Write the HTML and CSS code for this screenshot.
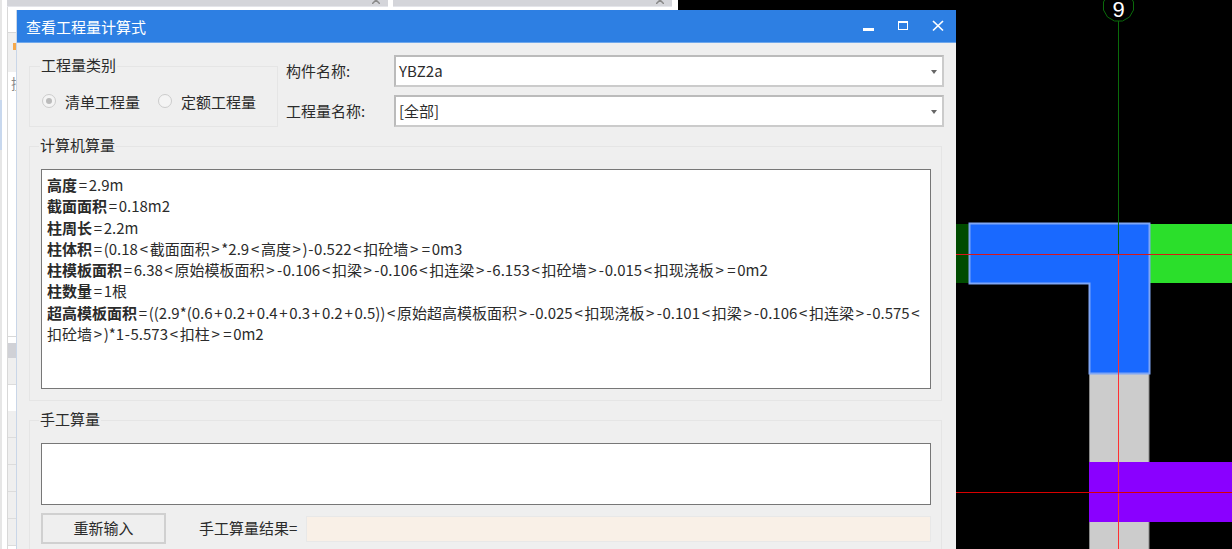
FILE: index.html
```html
<!DOCTYPE html>
<html lang="zh-CN">
<head>
    <meta charset="UTF-8">
    <title>查看工程量计算式</title>
    <link rel="stylesheet" href="styles.css">
</head>
<body>
    <!-- panels behind the dialog -->
    <div class="backdrop">
        <div class="left-edge"><div class="edge-mark"></div></div>
        <div class="side-panel">
            <div class="side-head"></div>
            <div class="side-toolbar"><span class="side-icon"></span></div>
            <div class="side-search">搜</div>
            <div class="side-list"></div>
            <div class="side-grid-head"></div>
            <div class="side-row"></div>
            <div class="side-row white"></div>
            <div class="side-row"></div>
            <div class="side-row"></div>
            <div class="side-row"></div>
            <div class="side-row"></div>
            <div class="side-row"></div>
        </div>
        <div class="back-tab tab-one">
            <svg class="tab-x" width="8" height="4" viewBox="0 0 8 4"><path d="M0 4L4 0L8 4" fill="none" stroke="#8a8a8a" stroke-width="1.500"/></svg>
        </div>
        <div class="back-tab tab-two">
            <svg class="tab-x" width="8" height="4" viewBox="0 0 8 4"><path d="M0 4L4 0L8 4" fill="none" stroke="#8a8a8a" stroke-width="1.500"/></svg>
        </div>
    </div>

    <!-- drawing canvas -->
    <svg class="canvas" width="277" height="549" viewBox="955 0 277 549">
        <rect x="955" y="224" width="277" height="59" fill="#2bdf2b"/>
        <rect x="955" y="224" width="14" height="59" fill="#004b00"/>
        <rect x="1089.500" y="373" width="59.500" height="177" fill="#cccccc" stroke="#8a8a8a"/>
        <rect x="1089" y="462" width="143" height="60" fill="#8a00ff"/>
        <path d="M969.500 223.500H1149.500V373.500H1089.500V283.500H969.500Z" fill="#1969ff" stroke="#7fa6f5" stroke-width="2"/>
        <line x1="1118.500" y1="21" x2="1118.500" y2="254" stroke="#0a6a0a"/>
        <line x1="1118.500" y1="254" x2="1118.500" y2="549" stroke="#ff3030"/>
        <line x1="955" y1="254.500" x2="1232" y2="254.500" stroke="#d81818"/>
        <line x1="955" y1="492.500" x2="1232" y2="492.500" stroke="#d80000"/>
        <path d="M1107.500 -5L1103.500 2L1103.500 10L1107.500 17L1114.500 21L1122.500 21L1129.500 17L1133.500 10L1133.500 2L1129.500 -5" fill="none" stroke="#0a6a0a"/>
        <text x="1118.500" y="17" class="axis-num">9</text>
    </svg>

    <div class="dialog">
        <div class="titlebar">
            <span class="title">查看工程量计算式</span>
            <div class="win-btns">
                <svg width="12" height="12" viewBox="0 0 12 12"><rect x="1" y="8" width="11" height="3" fill="#fff"/></svg>
                <svg width="12" height="12" viewBox="0 0 12 12"><rect x="1.500" y="1.500" width="9" height="8" fill="none" stroke="#fff"/><rect x="1" y="1" width="10" height="2" fill="#fff"/></svg>
                <svg width="12" height="12" viewBox="0 0 12 12"><path d="M1 1L11 10.500M11 1L1 10.500" stroke="#fff" stroke-width="1.700"/></svg>
            </div>
        </div>

        <div class="dialog-body">
            <div class="top-row">
                <fieldset class="group type-group">
                    <legend>工程量类别</legend>
                    <label class="radio"><span class="radio-dot checked"></span>清单工程量</label>
                    <label class="radio"><span class="radio-dot"></span>定额工程量</label>
                </fieldset>
                <div class="fields">
                    <div class="field">
                        <span class="field-label">构件名称:</span>
                        <div class="combo">YBZ2a<span class="arrow"></span></div>
                    </div>
                    <div class="field">
                        <span class="field-label">工程量名称:</span>
                        <div class="combo">[全部]<span class="arrow"></span></div>
                    </div>
                </div>
            </div>

            <fieldset class="group calc-group">
                <legend>计算机算量</legend>
                <div class="textbox calc-text">
                    <b>高度</b><span class="op">=</span>2.9m<br>
                    <b>截面面积</b><span class="op">=</span>0.18m2<br>
                    <b>柱周长</b><span class="op">=</span>2.2m<br>
                    <b>柱体积</b><span class="op">=</span>(0.18<span class="op">&lt;</span>截面面积<span class="op">&gt;</span>*2.9<span class="op">&lt;</span>高度<span class="op">&gt;</span>)<span class="dash">-</span>0.522<span class="op">&lt;</span>扣砼墙<span class="op">&gt;</span><span class="op">=</span>0m3<br>
                    <b>柱模板面积</b><span class="op">=</span>6.38<span class="op">&lt;</span>原始模板面积<span class="op">&gt;</span><span class="dash">-</span>0.106<span class="op">&lt;</span>扣梁<span class="op">&gt;</span><span class="dash">-</span>0.106<span class="op">&lt;</span>扣连梁<span class="op">&gt;</span><span class="dash">-</span>6.153<span class="op">&lt;</span>扣砼墙<span class="op">&gt;</span><span class="dash">-</span>0.015<span class="op">&lt;</span>扣现浇板<span class="op">&gt;</span><span class="op">=</span>0m2<br>
                    <b>柱数量</b><span class="op">=</span>1根<br>
                    <b>超高模板面积</b><span class="op">=</span>((2.9*(0.6<span class="op">+</span>0.2<span class="op">+</span>0.4<span class="op">+</span>0.3<span class="op">+</span>0.2<span class="op">+</span>0.5))<span class="op">&lt;</span>原始超高模板面积<span class="op">&gt;</span><span class="dash">-</span>0.025<span class="op">&lt;</span>扣现浇板<span class="op">&gt;</span><span class="dash">-</span>0.101<span class="op">&lt;</span>扣梁<span class="op">&gt;</span><span class="dash">-</span>0.106<span class="op">&lt;</span>扣连梁<span class="op">&gt;</span><span class="dash">-</span>0.575<span class="op">&lt;</span><br>
                    扣砼墙<span class="op">&gt;</span>)*1<span class="dash">-</span>5.573<span class="op">&lt;</span>扣柱<span class="op">&gt;</span><span class="op">=</span>0m2
                </div>
            </fieldset>

            <fieldset class="group manual-group">
                <legend>手工算量</legend>
                <div class="textbox manual-text"></div>
                <div class="manual-row">
                    <button class="redo-btn">重新输入</button>
                    <span class="result-label">手工算量结果=</span>
                    <div class="result-box"></div>
                </div>
            </fieldset>
        </div>
    </div>
</body>
</html>
```

FILE: styles.css
```css
html, body {
    margin: 0;
    padding: 0;
    height: 549px;
    overflow: hidden;
}

body {
    position: relative;
    width: 1232px;
    background-color: #000;
    font-family: "Noto Sans CJK SC", "Open Sans", sans-serif;
    font-size: 15px;
    color: #2b2b2b;
}

/* stuff behind the dialog */
.backdrop {
    position: absolute;
    left: 0;
    top: 0;
    width: 678px;
    height: 549px;
    background-color: #fff;
}

.left-edge {
    position: absolute;
    left: 0;
    top: 0;
    width: 2px;
    height: 549px;
    background-color: #e6e6e6;
}

.edge-mark {
    height: 50px;
    margin-top: 100px;
    background-color: #c8d8ee;
}

.side-panel {
    position: absolute;
    left: 7px;
    top: 0;
    width: 9px;
    height: 549px;
    display: flex;
    flex-direction: column;
    border-left: 1px solid #d8d8d8;
    box-sizing: border-box;
}

.side-head {
    height: 33px;
    border-bottom: 1px solid #d8d8d8;
    box-sizing: border-box;
}

.side-toolbar {
    height: 39px;
    background-color: #efefef;
    padding: 10px 0 0 5px;
    box-sizing: border-box;
}

.side-icon {
    display: block;
    width: 3px;
    height: 7px;
    background-color: #f6a84a;
}

.side-search {
    height: 23px;
    padding-left: 3px;
    font-size: 14px;
    line-height: 23px;
    color: #888;
    white-space: nowrap;
}

.side-list {
    height: 242px;
    border-bottom: 1px solid #d8d8d8;
    box-sizing: border-box;
}

.side-grid-head {
    height: 15px;
    margin-top: 6px;
    background-color: #d0d1d6;
}

.side-row {
    height: 26px;
    background-color: #efefef;
    border-bottom: 1px solid #dcdcdc;
    flex-shrink: 0;
}

.side-row.white {
    background-color: #fff;
    border-bottom: 0;
}

.back-tab {
    position: absolute;
    top: 0;
    height: 7px;
    background-color: #d4d5da;
    border-bottom: 1px solid #e4e5ea;
    box-sizing: border-box;
}

.tab-one {
    left: 7px;
    width: 381px;
}

.tab-two {
    left: 393px;
    width: 279px;
}

.tab-x {
    position: absolute;
    right: 8px;
    top: 0;
}

.canvas {
    position: absolute;
    left: 955px;
    top: 0;
}

.axis-num {
    fill: #fff;
    font-family: "Liberation Sans", sans-serif;
    font-size: 22px;
    text-anchor: middle;
}

.dialog {
    position: absolute;
    left: 16px;
    top: 10px;
    width: 940px;
    height: 539px;
    box-sizing: border-box;
    background-color: #efefef;
    overflow: hidden;
    border-left: 1px solid #c9d6e8;
}

.titlebar {
    height: 33px;
    margin-left: -1px;
    background-color: #2d7fe3;
    border-bottom: 1px solid #6fa8ec;
    box-sizing: border-box;
    display: flex;
    align-items: center;
    justify-content: space-between;
    padding: 0 12px 0 10px;
}

.title {
    color: #fff;
}

.win-btns {
    display: flex;
    gap: 23px;
}

.dialog-body {
    padding: 12px 12px 0 12px;
}

.top-row {
    display: flex;
    gap: 8px;
    height: 81px;
}

.group {
    margin: 0;
    padding: 0;
    border: 1px solid #e5e5e5;
    min-width: 0;
    box-sizing: border-box;
}

.group legend {
    position: relative;
    top: -1px;
    margin-left: -2px;
    padding: 0 1px;
    font-size: 15px;
    line-height: 20px;
}

.type-group {
    width: 249px;
    height: 71px;
    margin-top: 1px;
    display: flex;
    gap: 18px;
    padding: 15px 0 0 12px;
}

.radio {
    display: flex;
    align-items: center;
    gap: 9px;
    height: 20px;
}

.radio-dot {
    width: 14px;
    height: 14px;
    box-sizing: border-box;
    border: 1px solid #ccc;
    border-radius: 50%;
    background-color: #f4f4f4;
    position: relative;
}

.radio-dot.checked::after {
    content: "";
    position: absolute;
    left: 3px;
    top: 3px;
    width: 6px;
    height: 6px;
    border-radius: 50%;
    background-color: #bbb;
}

.fields {
    flex: 1;
    display: flex;
    flex-direction: column;
    gap: 8px;
}

.field {
    display: flex;
    align-items: center;
}

.field-label {
    width: 108px;
    flex-shrink: 0;
    margin-top: -1px;
}

.combo {
    flex: 1;
    height: 32px;
    box-sizing: border-box;
    line-height: 28px;
    padding-left: 3px;
    background-color: #fff;
    border: 2px solid #cbcbcb;
    border-top-color: #bbb;
    border-left-color: #bbb;
    position: relative;
}

.arrow {
    position: absolute;
    right: 5px;
    top: 13px;
    border-left: 3px solid transparent;
    border-right: 3px solid transparent;
    border-top: 4px solid #666;
}

.calc-group {
    height: 265px;
    margin-right: 2px;
    padding: 13px 10px 0 11px;
}

.textbox {
    background-color: #fff;
    border: 1px solid #777;
    box-sizing: border-box;
}

.calc-text {
    height: 220px;
    padding: 4px 5px;
    line-height: 21.300px;
    white-space: nowrap;
}

.calc-text b {
    font-weight: 700;
}

/* the < > = signs sit wider in the reference font */
.op {
    padding: 0 1.700px;
}

.dash {
    padding: 0 0.600px;
}

.manual-group {
    margin-top: 9px;
    margin-right: 2px;
    padding: 13px 10px 0 11px;
    height: 145px;
}

.manual-text {
    height: 62px;
}

.manual-row {
    display: flex;
    align-items: center;
    margin-top: 8px;
}

.redo-btn {
    width: 125px;
    height: 31px;
    background-color: #efefef;
    border: 2px solid #d0d0d0;
    font: inherit;
    color: inherit;
    padding: 0 0 2px;
}

.result-label {
    margin-left: 33px;
    margin-right: 9px;
    margin-bottom: 3px;
}

.result-box {
    flex: 1;
    height: 26px;
    box-sizing: border-box;
    background-color: #f9f0e7;
    border: 1px solid #e8e8e8;
}
```
